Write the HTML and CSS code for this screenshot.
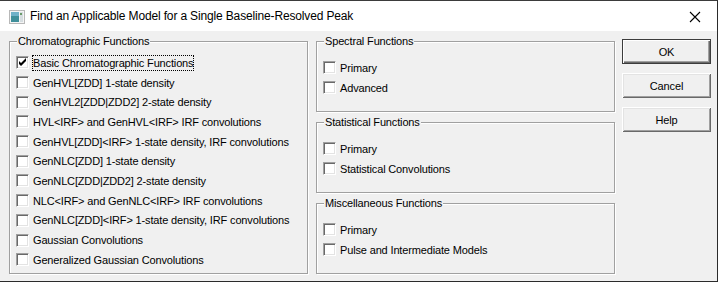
FILE: index.html
```html
<!DOCTYPE html>
<html lang="en">
<head>
    <meta charset="UTF-8">
    <title>Find an Applicable Model for a Single Baseline-Resolved Peak</title>
    <link rel="stylesheet" href="styles.css">
</head>
<body>
    <div class="window">
        <div class="titlebar">
            <svg class="app-icon" width="16" height="14" viewBox="0 0 16 14">
                <rect x="0.5" y="0.5" width="15" height="13" fill="#f4f4f4" stroke="#b8b8b8"/>
                <rect x="2" y="2" width="8" height="10" fill="#3f8f9a"/>
                <rect x="2" y="2" width="8" height="4" fill="#6fb1c8"/>
                <rect x="11" y="2" width="3" height="10" fill="#d6dde0"/>
                <rect x="11" y="3" width="2" height="2" fill="#6a9a6a"/>
            </svg>
            <span class="title">Find an Applicable Model for a Single Baseline-Resolved Peak</span>
            <svg class="close" width="12" height="12" viewBox="0 0 12 12">
                <path d="M1 1 L11 11 M11 1 L1 11" stroke="#000" stroke-width="1.1" fill="none"/>
            </svg>
        </div>

        <div class="client">
            <!-- left group -->
            <fieldset class="group group-chrom">
                <legend>Chromatographic Functions</legend>
                <label class="check">
                    <span class="box checked">
                        <svg width="11" height="11" viewBox="0 0 11 11"><path d="M2 4v3l2 2 5-5V1L4 6z" fill="#000"/></svg>
                    </span>
                    <span class="text focused">Basic Chromatographic Functions</span>
                </label>
                <label class="check"><span class="box"></span><span class="text">GenHVL[ZDD] 1-state density</span></label>
                <label class="check"><span class="box"></span><span class="text">GenHVL2[ZDD|ZDD2] 2-state density</span></label>
                <label class="check"><span class="box"></span><span class="text">HVL&lt;IRF&gt; and GenHVL&lt;IRF&gt; IRF convolutions</span></label>
                <label class="check"><span class="box"></span><span class="text">GenHVL[ZDD]&lt;IRF&gt; 1-state density, IRF convolutions</span></label>
                <label class="check"><span class="box"></span><span class="text">GenNLC[ZDD] 1-state density</span></label>
                <label class="check"><span class="box"></span><span class="text">GenNLC[ZDD|ZDD2] 2-state density</span></label>
                <label class="check"><span class="box"></span><span class="text">NLC&lt;IRF&gt; and GenNLC&lt;IRF&gt; IRF convolutions</span></label>
                <label class="check"><span class="box"></span><span class="text">GenNLC[ZDD]&lt;IRF&gt; 1-state density, IRF convolutions</span></label>
                <label class="check"><span class="box"></span><span class="text">Gaussian Convolutions</span></label>
                <label class="check"><span class="box"></span><span class="text">Generalized Gaussian Convolutions</span></label>
            </fieldset>

            <!-- right groups -->
            <div class="side">
                <fieldset class="group">
                    <legend>Spectral Functions</legend>
                    <label class="check"><span class="box"></span><span class="text">Primary</span></label>
                    <label class="check"><span class="box"></span><span class="text">Advanced</span></label>
                </fieldset>
                <fieldset class="group">
                    <legend>Statistical Functions</legend>
                    <label class="check"><span class="box"></span><span class="text">Primary</span></label>
                    <label class="check"><span class="box"></span><span class="text">Statistical Convolutions</span></label>
                </fieldset>
                <fieldset class="group">
                    <legend>Miscellaneous Functions</legend>
                    <label class="check"><span class="box"></span><span class="text">Primary</span></label>
                    <label class="check"><span class="box"></span><span class="text">Pulse and Intermediate Models</span></label>
                </fieldset>
            </div>

            <div class="buttons">
                <button class="btn default">OK</button>
                <button class="btn">Cancel</button>
                <button class="btn">Help</button>
            </div>
        </div>
    </div>
</body>
</html>
```

FILE: styles.css
```css
:root {
    --face: #f0f0f0;
    --etch-dark: #a0a0a0;
    --shadow: #696969;
    --ui-font: 'Liberation Sans', Arial, sans-serif;
}

* {
    box-sizing: border-box;
}

body {
    margin: 0;
    font-family: var(--ui-font);
    font-size: 11px;
    letter-spacing: -0.15px;
    color: #000;
    background: #fff;
}

.window {
    width: 718px;
    height: 282px;
    display: flex;
    flex-direction: column;
    background: var(--face);
    border-top: 1px solid #3b3b3b;
    border-right: 1px solid #2b2b2b;
    border-bottom: 1px solid #2b2b2b;
}

.titlebar {
    height: 30px;
    flex: none;
    display: flex;
    align-items: center;
    background: #fff;
    padding-left: 9px;
}

.app-icon {
    margin-top: 2px;
}

.title {
    margin-left: 5px;
    font-size: 12px;
    letter-spacing: -0.15px;
}

.close {
    margin-left: auto;
    margin-right: 16px;
    margin-top: 2px;
}

.client {
    flex: 1;
    display: flex;
    padding: 4px 0 7px 9px;
}

.group {
    margin: 0;
    padding: 0 0 0 6px;
    min-width: 0;
    border: 1px solid var(--etch-dark);
    box-shadow: 1px 1px 0 #fff, inset 1px 1px 0 #fff;
}

.group legend {
    padding: 0 1px;
    margin-left: 1px;
    line-height: 13px;
    background: var(--face);
}

.group-chrom {
    width: 299px;
    padding-top: 5px;
}

.side {
    width: 299px;
    margin-left: 8px;
    display: flex;
    flex-direction: column;
    gap: 4px;
}

.side .group {
    flex: 1;
    padding-top: 10px;
}

.check {
    display: flex;
    align-items: center;
    height: 19.7px;
}

.box {
    width: 13px;
    height: 13px;
    flex: none;
    display: flex;
    align-items: center;
    justify-content: center;
    background: #fff;
    border: 1px solid;
    border-color: var(--etch-dark) #fff #fff var(--etch-dark);
    box-shadow: inset 1px 1px 0 var(--shadow), inset -1px -1px 0 #e3e3e3;
}

.text {
    margin-left: 4px;
    line-height: 14px;
    white-space: nowrap;
}

.text.focused {
    outline: 1px dotted #000;
}

.buttons {
    width: 89px;
    margin-left: 7px;
    padding-top: 4px;
    display: flex;
    flex-direction: column;
    gap: 9px;
}

.btn {
    height: 25px;
    font-family: var(--ui-font);
    font-size: 11px;
    letter-spacing: -0.15px;
    color: #000;
    background: var(--face);
    border: none;
    padding: 0;
    box-shadow: inset 1px 1px 0 #fff, inset -1px -1px 0 var(--shadow),
                inset 2px 2px 0 #e3e3e3, inset -2px -2px 0 var(--etch-dark);
}

.btn.default {
    border: 1px solid #3c3c3c;
    box-shadow: inset 1px 1px 0 #fff, inset -1px -1px 0 var(--shadow),
                inset -2px -2px 0 var(--etch-dark);
}
```
